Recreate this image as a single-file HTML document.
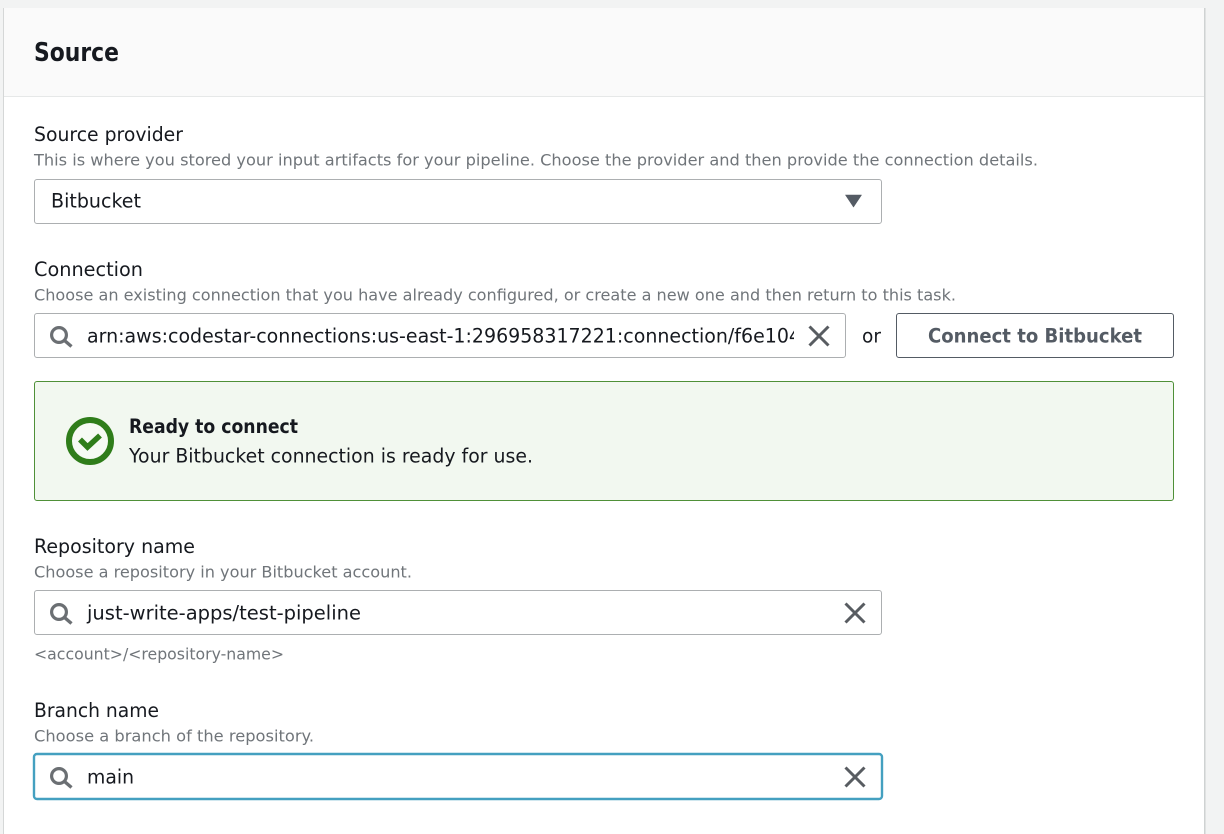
<!DOCTYPE html>
<html lang="en">
<head>
<meta charset="utf-8">
<title>Source</title>
<style>
html,body{margin:0;padding:0;width:1224px;height:834px;overflow:hidden;background:#f2f3f3}
svg{display:block}
text{font-family:"DejaVu Sans","Liberation Sans",sans-serif;fill:#16191f}
.h{font-size:16px;fill:#70757a}
.l{font-size:19.5px;fill:#16191f}
.v{font-size:19.5px;fill:#16191f}
.b{font-weight:700}
</style>
</head>
<body>
<svg width="1224" height="834" viewBox="0 0 1224 834" xmlns="http://www.w3.org/2000/svg">
<defs>
<clipPath id="c"><rect x="80" y="315" width="714" height="42"/></clipPath>
<g id="s" fill="none" stroke="#6b6f73" stroke-width="3.2"><circle cx="-2" cy="-1" r="7.4"/><path d="M3.5 4.5L10.5 10.5" stroke-width="3.4"/></g>
<g id="x" fill="none" stroke="#585c61" stroke-width="3"><path d="M-9.5-9.5L9.5 9.5M9.5-9.5L-9.5 9.5"/></g>
</defs>

<rect width="1224" height="834" fill="#f2f3f3"/>
<rect x="3" y="8" width="1202" height="826" fill="#fff"/>
<rect x="3" y="8" width="1202" height="88" fill="#fafafa"/>
<rect x="3" y="96" width="1202" height="1" fill="#e6e8e8"/>
<rect x="3" y="8" width="1" height="826" fill="#d5d7d7"/>
<rect x="1204" y="8" width="1.5" height="826" fill="#cfd2d2"/>

<text x="34" y="61" font-size="25.5" class="b" textLength="85" lengthAdjust="spacingAndGlyphs">Source</text>

<text x="34" y="141" class="l" textLength="149" lengthAdjust="spacingAndGlyphs">Source provider</text>
<text x="34" y="165.5" class="h" textLength="1004" lengthAdjust="spacingAndGlyphs">This is where you stored your input artifacts for your pipeline. Choose the provider and then provide the connection details.</text>
<rect x="34.5" y="179.5" width="847" height="44" rx="2.5" fill="#fff" stroke="#acafb1"/>
<text x="51" y="207.5" class="v" textLength="90" lengthAdjust="spacingAndGlyphs">Bitbucket</text>
<path d="M845.5 195H861.5L853.5 207Z" fill="#545b64" stroke="#545b64" stroke-width=".6" stroke-linejoin="round"/>

<text x="34" y="276" class="l" textLength="109" lengthAdjust="spacingAndGlyphs">Connection</text>
<text x="34" y="300.5" class="h" textLength="922" lengthAdjust="spacingAndGlyphs">Choose an existing connection that you have already configured, or create a new one and then return to this task.</text>
<rect x="34.5" y="313.5" width="811" height="44" rx="2.5" fill="#fff" stroke="#acafb1"/>
<use href="#s" x="61" y="336"/>
<g clip-path="url(#c)"><text x="87" y="342.5" class="v" textLength="714" lengthAdjust="spacingAndGlyphs">arn:aws:codestar-connections:us-east-1:296958317221:connection/f6e104</text></g>
<use href="#x" x="819" y="336"/>
<text x="862" y="342.5" class="v" textLength="19" lengthAdjust="spacingAndGlyphs">or</text>
<rect x="896.5" y="313.5" width="277" height="44" rx="2.5" fill="#fff" stroke="#545b64"/>
<text x="928" y="342.5" font-size="19.5" class="b" style="fill:#545b64" textLength="214" lengthAdjust="spacingAndGlyphs">Connect to Bitbucket</text>

<rect x="34.5" y="381.5" width="1139" height="119" rx="2.5" fill="#f2f8f0" stroke="#4f9038"/>
<circle cx="90" cy="441" r="21" fill="#fff" fill-opacity=".3" stroke="#2f7d1a" stroke-width="6"/>
<path d="M80 439.5L87.5 447L100 435.5" fill="none" stroke="#2f7d1a" stroke-width="5.6"/>
<text x="129" y="433" font-size="19.5" class="b" textLength="169" lengthAdjust="spacingAndGlyphs">Ready to connect</text>
<text x="129" y="462.5" class="v" textLength="404" lengthAdjust="spacingAndGlyphs">Your Bitbucket connection is ready for use.</text>

<text x="34" y="553" class="l" textLength="161" lengthAdjust="spacingAndGlyphs">Repository name</text>
<text x="34" y="577.5" class="h" textLength="378" lengthAdjust="spacingAndGlyphs">Choose a repository in your Bitbucket account.</text>
<rect x="34.5" y="590.5" width="847" height="44" rx="2.5" fill="#fff" stroke="#acafb1"/>
<use href="#s" x="61" y="613"/>
<text x="87" y="619.5" class="v" textLength="274" lengthAdjust="spacingAndGlyphs">just-write-apps/test-pipeline</text>
<use href="#x" x="855" y="613"/>
<text x="34" y="659.5" class="h" textLength="250" lengthAdjust="spacingAndGlyphs">&lt;account&gt;/&lt;repository-name&gt;</text>

<text x="34" y="717" class="l" textLength="125" lengthAdjust="spacingAndGlyphs">Branch name</text>
<text x="34" y="741.5" class="h" textLength="280" lengthAdjust="spacingAndGlyphs">Choose a branch of the repository.</text>
<rect x="34" y="754" width="848" height="45" rx="3" fill="#fff" stroke="#44a0c0" stroke-width="2.4"/>
<use href="#s" x="61" y="777"/>
<text x="87" y="783.5" class="v" textLength="47" lengthAdjust="spacingAndGlyphs">main</text>
<use href="#x" x="855" y="777"/>
</svg>
</body>
</html>
